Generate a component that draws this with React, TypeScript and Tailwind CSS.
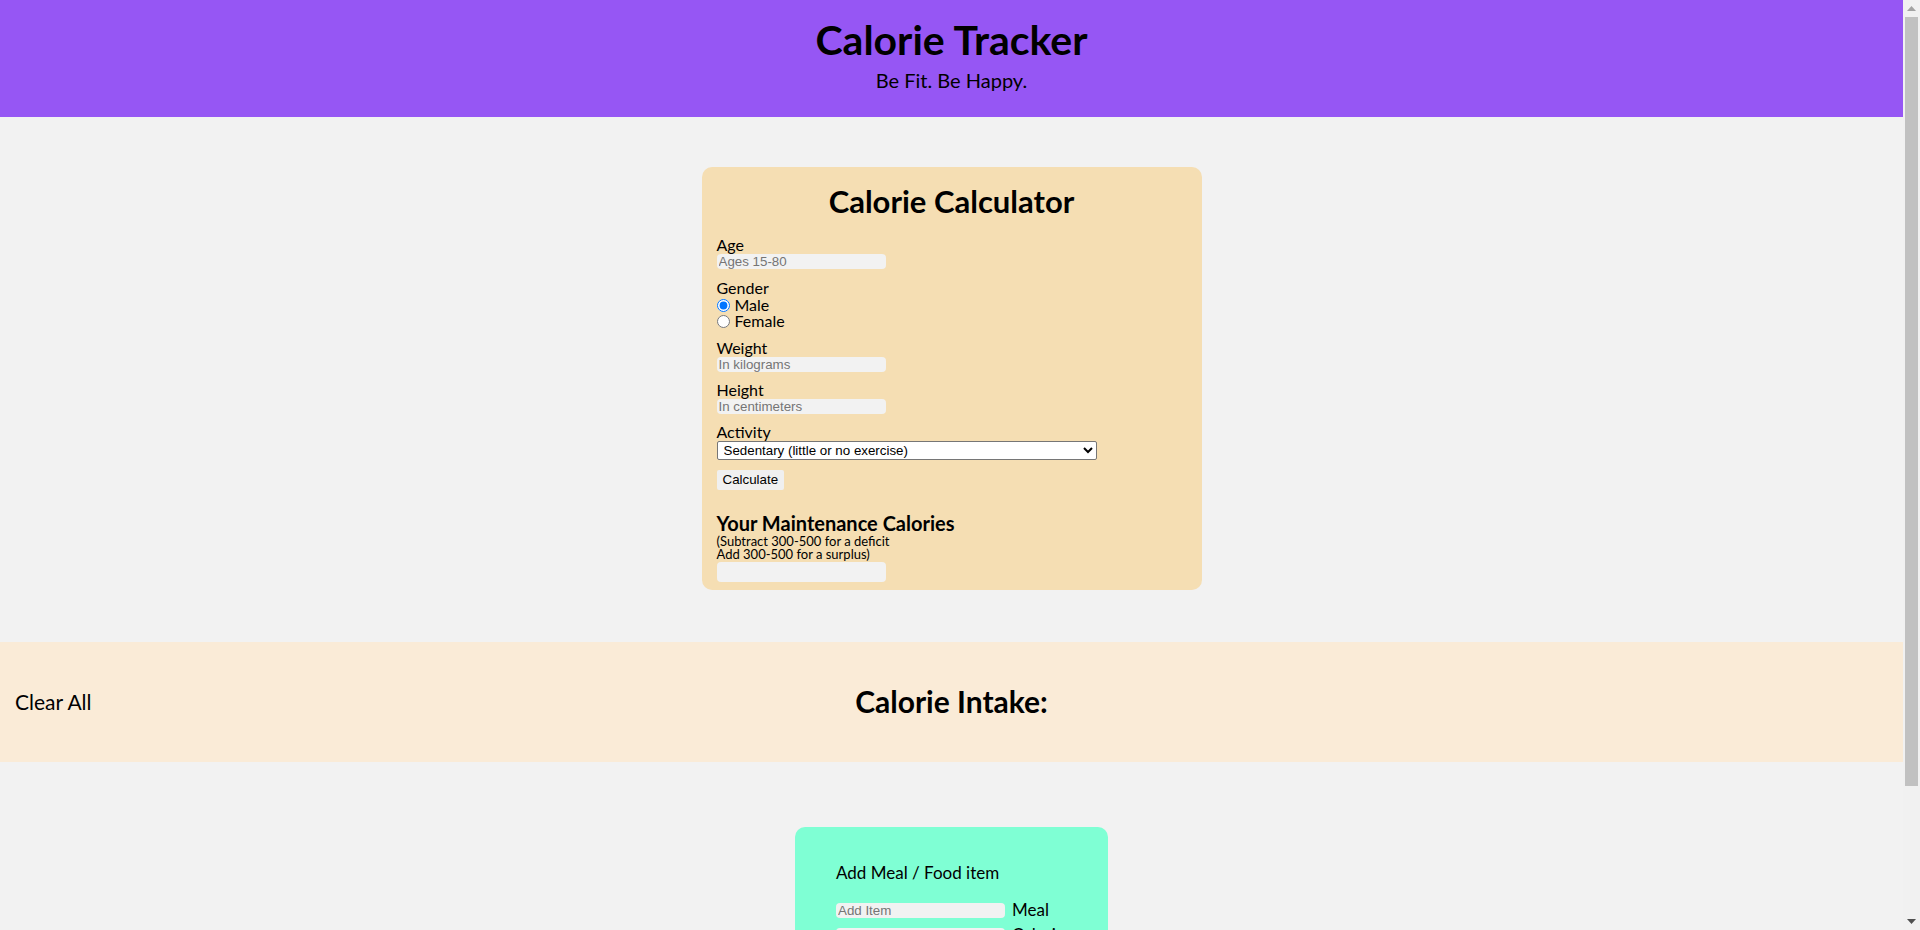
import React from "react";

const sans = "font-['Lato','Noto_Sans',sans-serif]";
const field =
  "block h-[15px] w-[169px] rounded-[4px] bg-[#f2f2f2] px-[2px] font-['Liberation_Sans',Arial,sans-serif] text-[13.33px] leading-[15px] text-black placeholder:text-[#757575] outline-none";

const Label: React.FC<{ children: React.ReactNode }> = ({ children }) => (
  <div className="text-[16px] leading-[18px] text-black">{children}</div>
);

// window scrollbar as it appears in the screenshot
const Scrollbar = () => (
  <div className="fixed top-0 right-0 flex h-[930px] w-[17px] flex-col bg-[#f1f1f1]">
    <div className="flex h-[17px] items-center justify-center">
      <svg width="9" height="5" viewBox="0 0 9 5">
        <path d="M0 5 L4.5 0 L9 5 Z" fill="#a3a3a3" />
      </svg>
    </div>
    <div className="mx-[2px] h-[769px] bg-[#c1c1c1]" />
    <div className="flex-1" />
    <div className="flex h-[17px] items-center justify-center">
      <svg width="9" height="5" viewBox="0 0 9 5">
        <path d="M0 0 L9 0 L4.5 5 Z" fill="#505050" />
      </svg>
    </div>
  </div>
);

export default function App() {
  return (
    <div className={`min-h-[1083px] bg-[#f2f2f2] ${sans} text-black`}>
      <div className="mr-[17px]">
        <header className="flex h-[117px] flex-col items-center bg-[#9656f4] pt-[15px]">
          <h1 className="text-[41px] font-bold leading-[50px]">Calorie Tracker</h1>
          <p className="mt-[3px] text-[20px] leading-[24px]">Be Fit. Be Happy.</p>
        </header>

        <div className="flex justify-center pt-[50px]">
          <section className="h-[423px] w-[500px] rounded-[10px] bg-[#f5deb3] px-[15px] pt-[15px]">
            <h2 className="text-center text-[31px] font-bold leading-[38px]">Calorie Calculator</h2>

            <div className="mt-[16px]">
              <Label>Age</Label>
              <input className={field} placeholder="Ages 15-80" />
            </div>

            <div className="mt-[10px]">
              <Label>Gender</Label>
              <label className="flex h-[16px] items-center gap-[5px] text-[16px] leading-[16px]">
                <input type="radio" name="g" defaultChecked className="m-0 h-[13px] w-[13px]" />
                Male
              </label>
              <label className="flex h-[16px] items-center gap-[5px] text-[16px] leading-[16px]">
                <input type="radio" name="g" className="m-0 h-[13px] w-[13px]" />
                Female
              </label>
            </div>

            <div className="mt-[10px]">
              <Label>Weight</Label>
              <input className={field} placeholder="In kilograms" />
            </div>

            <div className="mt-[9px]">
              <Label>Height</Label>
              <input className={field} placeholder="In centimeters" />
            </div>

            <div className="mt-[9px]">
              <Label>Activity</Label>
              <select className="block h-[19px] w-[380px] rounded-[2px] border border-[#767676] bg-white pl-[2px] font-['Liberation_Sans',Arial,sans-serif] text-[13.33px] leading-[15px] text-black">
                <option>Sedentary (little or no exercise)</option>
                <option>Lightly active (1-3 days/week)</option>
                <option>Moderately active (3-5 days/week)</option>
                <option>Very active (6-7 days/week)</option>
              </select>
            </div>

            <button className="mt-[10px] h-[20px] rounded-[2px] bg-[#f0f0f0] px-[6px] font-['Liberation_Sans',Arial,sans-serif] text-[13.33px] leading-[20px] text-black">
              Calculate
            </button>

            <h3 className="mt-[22px] text-[20px] font-bold leading-[23px]">Your Maintenance Calories</h3>
            <p className="text-[13px] leading-[13px]">
              (Subtract 300-500 for a deficit
              <br />
              Add 300-500 for a surplus)
            </p>
            <input className={`${field} mt-[1px] h-[20px]`} readOnly />
          </section>
        </div>

        <div className="mt-[52px] grid h-[120px] grid-cols-[1fr_auto_1fr] items-center bg-[#faebd7] px-[15px]">
          <button className="justify-self-start text-[21px] leading-[26px]">Clear All</button>
          <h2 className="-mt-[2px] text-[30px] font-bold leading-[36px]">Calorie Intake:</h2>
          <div />
        </div>

        <div className="flex justify-center pt-[65px] pb-[64px]">
          <section className="w-[313px] rounded-[10px] bg-[#7fffd4] px-[41px] pt-[36px] pb-[40px]">
            <h4 className="text-[17px] leading-[20px]">Add Meal / Food item</h4>
            <div className="mt-[17px] flex items-center gap-[7px]">
              <input className={`${field} w-[169px]`} placeholder="Add Item" />
              <span className="text-[17px] leading-[20px]">Meal</span>
            </div>
            <div className="mt-[5px] flex items-center gap-[7px]">
              <input className={`${field} w-[169px]`} placeholder="Add Calories" />
              <span className="text-[17px] leading-[20px]">Calories</span>
            </div>
            <button className="mt-[14px] h-[20px] rounded-[2px] bg-[#f0f0f0] px-[6px] font-['Liberation_Sans',Arial,sans-serif] text-[13.33px] leading-[20px]">
              Add Meal
            </button>
          </section>
        </div>
      </div>
      <Scrollbar />
    </div>
  );
}
